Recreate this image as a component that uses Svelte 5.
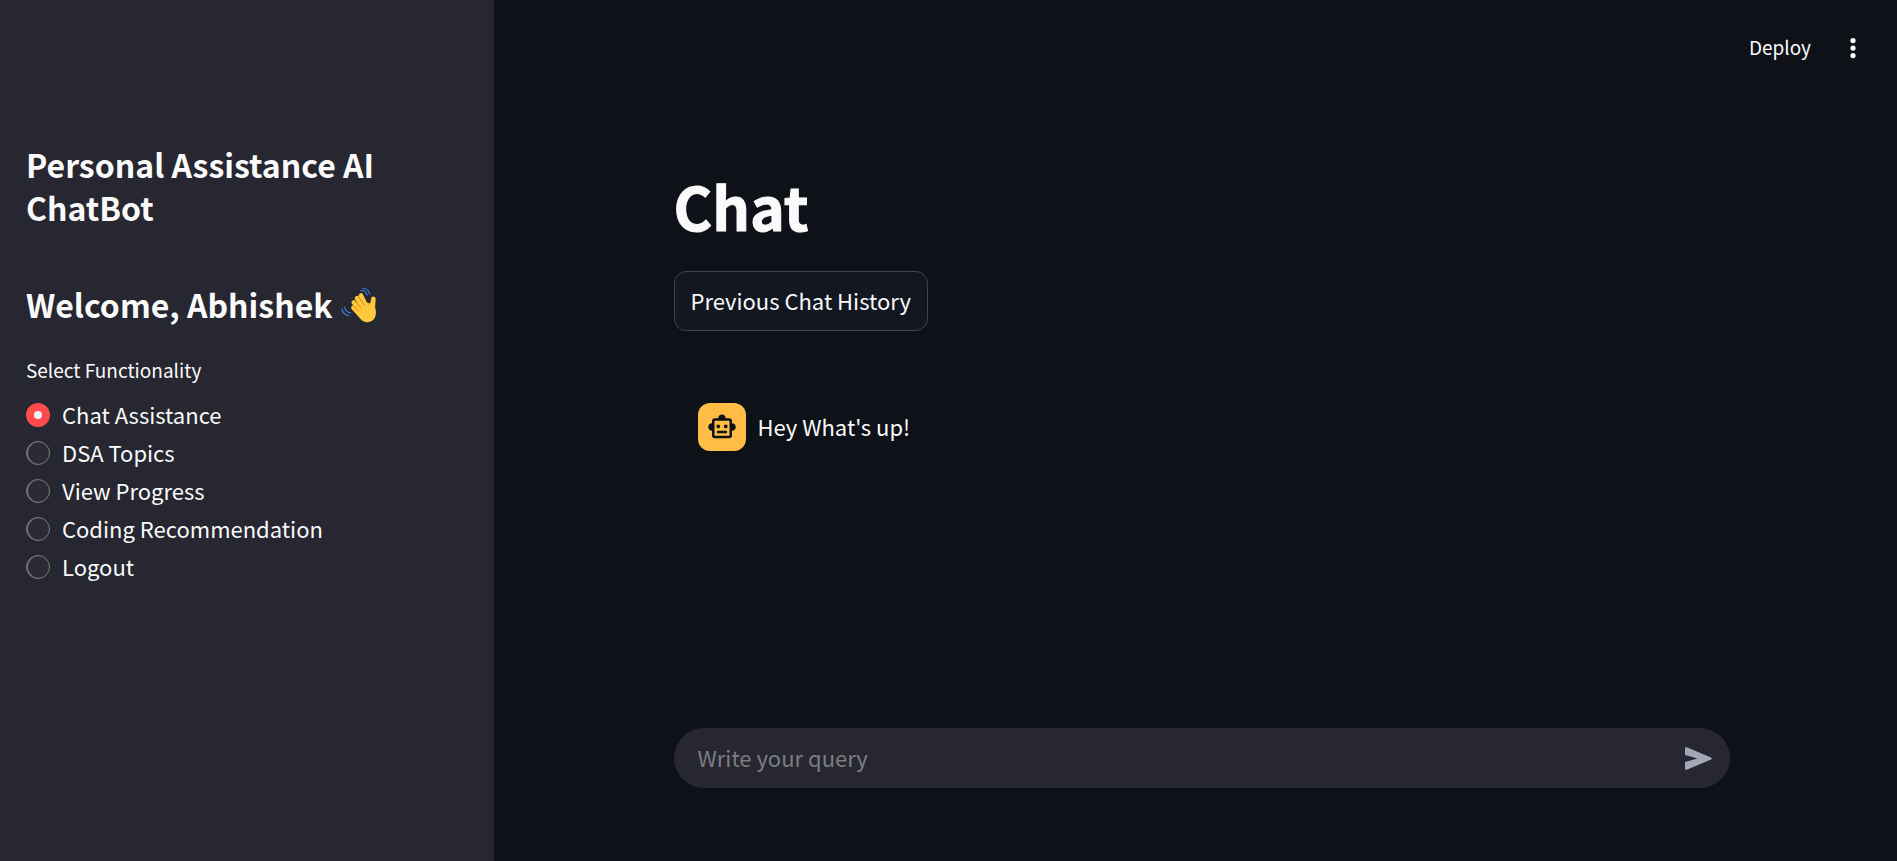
<script>
  const options = ['Chat Assistance', 'DSA Topics', 'View Progress', 'Coding Recommendation', 'Logout'];
  let selected = $state('Chat Assistance');
  let query = $state('');
</script>

<div class="app">
  <aside>
    <h2>Personal Assistance AI ChatBot</h2>
    <h2 class="welcome">
      Welcome, Abhishek
      <svg class="wave" viewBox="46 36 110 110" role="img" aria-label="Waving hand">
        <g fill="none" stroke="#3f82e8" stroke-width="3.4" stroke-linecap="round">
          <path d="M112 40c10-1 19 7 22 18" />
          <path d="M107 47c9-1 16 5 19 14" />
          <path d="M49 103c1 10 10 20 21 21" />
          <path d="M57 97c1 9 8 16 18 18" />
        </g>
        <g fill="none" stroke="#ffc83d" stroke-width="14" stroke-linecap="round">
          <path d="M126 100 107 62" />
          <path d="M118 105 95 70" />
          <path d="M112 112 85 83" />
          <path d="M112 120 84 99" />
          <path d="M142 112 145 72" />
        </g>
        <path fill="#ffc83d" d="M79 104 110 138c14 9 31 7 39-7 5-9 4-21 2-31l-12-20-6 6-13-4-25 10z" />
        <path fill="none" stroke="#d98712" stroke-width="3" stroke-linecap="round" d="m101 68 17 24M90 80l18 21M84 94l15 14M138 76c-1 8-4 12-7 13" />
      </svg>
    </h2>
    <fieldset>
      <legend>Select Functionality</legend>
      {#each options as option}
        <label>
          <input type="radio" name="functionality" value={option} bind:group={selected} />
          <span>{option}</span>
        </label>
      {/each}
    </fieldset>
  </aside>

  <main>
    <header>
      <button class="deploy" type="button">Deploy</button>
      <button class="menu" type="button" aria-label="Main menu">
        <svg viewBox="0 0 24 24" fill="currentColor">
          <circle cx="12" cy="6" r="2.1" />
          <circle cx="12" cy="12" r="2.1" />
          <circle cx="12" cy="18" r="2.1" />
        </svg>
      </button>
    </header>

    <div class="content">
      <h1>Chat</h1>
      <button class="history" type="button">Previous Chat History</button>
      <div class="message">
        <div class="avatar">
          <svg viewBox="0 0 24 24" fill="currentColor" aria-hidden="true">
            <path d="M20 9V7c0-1.1-.9-2-2-2h-3c0-1.66-1.34-3-3-3S9 3.34 9 5H6c-1.1 0-2 .9-2 2v2c-1.66 0-3 1.34-3 3s1.34 3 3 3v4c0 1.1.9 2 2 2h12c1.1 0 2-.9 2-2v-4c1.66 0 3-1.34 3-3s-1.34-3-3-3zm-2 10H6V7h12v12zm-9-6c-.83 0-1.5-.67-1.5-1.5S8.17 10 9 10s1.5.67 1.5 1.5S9.83 13 9 13zm7.5-1.5c0 .83-.67 1.5-1.5 1.5s-1.5-.67-1.5-1.5.67-1.5 1.5-1.5 1.5.67 1.5 1.5zM8 15h8v2H8v-2z" />
          </svg>
        </div>
        <p>Hey What's up!</p>
      </div>
      <form onsubmit={(e) => e.preventDefault()}>
        <input type="text" placeholder="Write your query" aria-label="Write your query" bind:value={query} />
        <button type="submit" aria-label="Send">
          <svg viewBox="0 0 27 23" fill="currentColor">
            <path d="M0 1.5C0 .5.9 0 1.8.3L26 10.4c1 .4 1 1.8 0 2.2L1.8 22.7C.9 23 0 22.5 0 21.5V15l12.5-3.5L0 8z" />
          </svg>
        </button>
      </form>
    </div>
  </main>
</div>

<style>
  :global(body) {
    margin: 0;
    background: #0e1117;
  }
  .app {
    display: flex;
    min-height: 100vh;
    color: #fafafa;
    font-family: 'Noto Sans CJK SC', 'Noto Sans', sans-serif;
    font-size: 22px;
  }
  button,
  input {
    font: inherit;
    color: inherit;
  }
  button {
    padding: 0;
    border: 0;
    background: none;
    cursor: pointer;
  }
  svg {
    display: block;
  }
  aside {
    box-sizing: border-box;
    flex: 0 0 494px;
    padding: 143px 26px 0;
    background: #262730;
  }
  h2 {
    margin: 0;
    font-size: 32px;
    font-weight: 600;
    line-height: 43px;
  }
  .welcome {
    display: flex;
    align-items: center;
    gap: 8px;
    margin-top: 54px;
  }
  .wave {
    width: 36px;
    height: 36px;
  }
  fieldset {
    display: flex;
    flex-direction: column;
    margin: 27px 0 0;
    padding: 0;
    border: 0;
  }
  legend {
    padding: 0;
    margin-bottom: 9px;
    font-size: 19px;
    line-height: 34px;
  }
  label {
    display: flex;
    align-items: center;
    gap: 12px;
    height: 38px;
  }
  label span,
  p,
  .deploy,
  form input {
    padding: 0 0 3px;
  }
  input[type='radio'] {
    appearance: none;
    box-sizing: border-box;
    width: 24px;
    height: 24px;
    margin: 0;
    border: 1px solid #7c7d83;
    border-radius: 50%;
    background: #2a2b34;
    box-shadow: inset 1px 0 #7c7d83;
  }
  input[type='radio']:checked {
    border: 8px solid #ff4b4b;
    background: #f0f2f6;
    box-shadow: none;
  }
  main {
    display: flex;
    flex: 1;
    flex-direction: column;
    min-width: 0;
  }
  header {
    display: flex;
    align-items: center;
    justify-content: flex-end;
    gap: 27px;
    height: 96px;
    padding-right: 29px;
  }
  .deploy {
    font-size: 19px;
  }
  .menu svg {
    width: 30px;
    height: 30px;
  }
  .content {
    display: flex;
    flex: 1;
    flex-direction: column;
    align-items: flex-start;
    box-sizing: border-box;
    width: 100%;
    max-width: 1084px;
    margin: 0 auto;
    padding: 70px 8px 73px 20px;
  }
  h1 {
    margin: 0;
    font-size: 59px;
    font-weight: 700;
    line-height: 80px;
    -webkit-text-stroke: 1px currentColor;
  }
  .history {
    box-sizing: border-box;
    height: 60px;
    margin-top: 25px;
    padding: 0 16px 3px;
    border: 1px solid #41444c;
    border-radius: 12px;
    background: #131720;
  }
  .message {
    display: flex;
    align-items: center;
    gap: 12px;
    margin: 72px 24px 0;
  }
  .avatar {
    display: grid;
    place-items: center;
    width: 48px;
    height: 48px;
    border-radius: 12px;
    background: #ffbd45;
    color: #0e1117;
  }
  .avatar svg {
    width: 30px;
    height: 30px;
  }
  p {
    margin: 0;
  }
  form {
    display: flex;
    align-items: center;
    box-sizing: border-box;
    width: 100%;
    height: 60px;
    margin-top: auto;
    padding: 0 18px 0 24px;
    border-radius: 30px;
    background: #262730;
  }
  form input {
    flex: 1;
    min-width: 0;
    border: 0;
    outline: 0;
    background: none;
  }
  form input::placeholder {
    color: #7d7d83;
    opacity: 1;
  }
  form button {
    color: #a3a8b8;
  }
  form svg {
    width: 27px;
    height: 23px;
  }
</style>
